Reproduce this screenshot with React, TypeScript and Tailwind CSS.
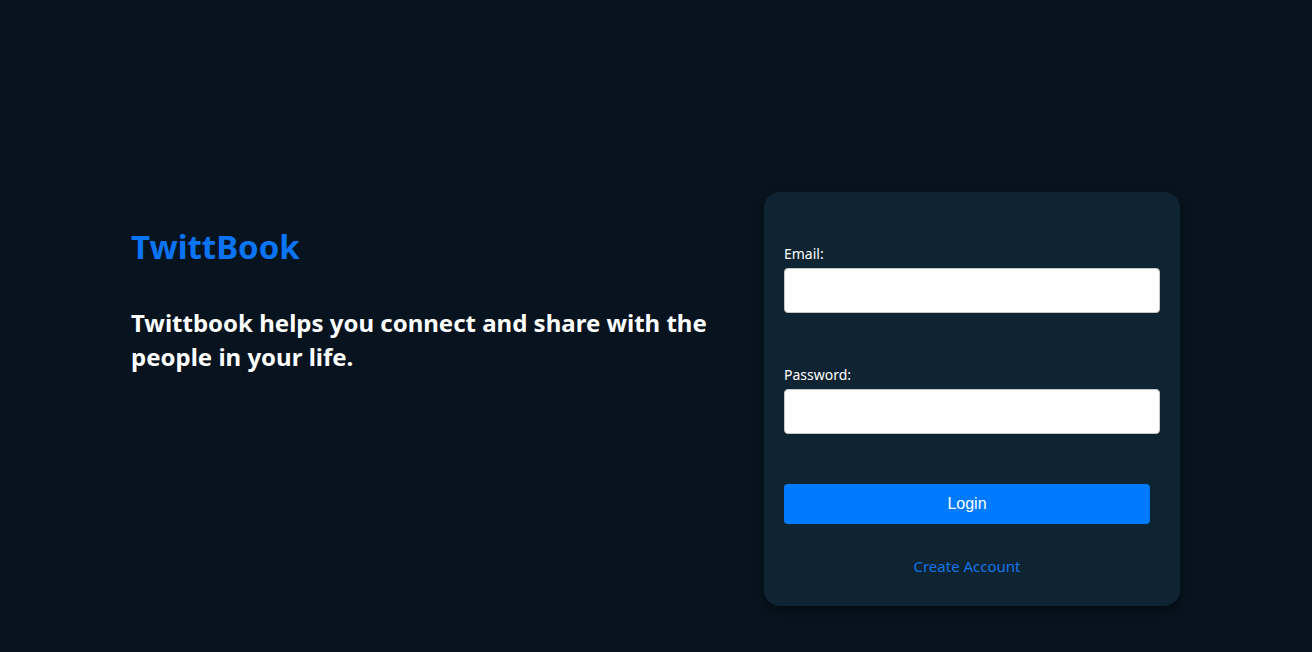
import React from "react";

export default function App() {
  return (
    <div
      className="min-h-screen w-full bg-[#07141f] text-white"
      style={{ fontFamily: '"Noto Sans", "Open Sans", sans-serif' }}
    >
      <div className="flex flex-row items-start pt-[192px] pl-[131px]">
        <div className="w-[600px] pt-[38px]">
          <h1 className="text-[33px] leading-[34px] font-bold text-[#0a74f5]">TwittBook</h1>
          <p className="mt-[42px] text-[24px] leading-[34px] font-bold text-white">
            Twittbook helps you connect and share with the people in your life.
          </p>
        </div>
        <div className="ml-[33px] w-[416px] rounded-2xl bg-[#0f2433] px-5 pt-[52px] pb-[30px] shadow-[0_4px_12px_rgba(0,0,0,0.45)]">
          <form className="flex flex-col" onSubmit={(e) => e.preventDefault()}>
            <label className="text-[14px] leading-[20px] text-white">Email:</label>
            <input
              type="email"
              className="mt-[4px] h-[45px] w-[376px] rounded-[4px] border border-[#c7c7c7] bg-white px-2 text-black"
            />
            <label className="mt-[52px] text-[14px] leading-[20px] text-white">Password:</label>
            <input
              type="password"
              className="mt-[4px] h-[45px] w-[376px] rounded-[4px] border border-[#c7c7c7] bg-white px-2 text-black"
            />
            <button
              type="submit"
              className="mt-[50px] h-[40px] w-[366px] rounded-[4px] bg-[#007bff] text-[16px] text-white"
              style={{ fontFamily: '"Liberation Sans", Arial, sans-serif' }}
            >
              Login
            </button>
            <a className="mt-[32px] block w-[366px] text-center text-[15px] leading-[20px] text-[#1573e6] cursor-pointer">
              Create Account
            </a>
          </form>
        </div>
      </div>
    </div>
  );
}
